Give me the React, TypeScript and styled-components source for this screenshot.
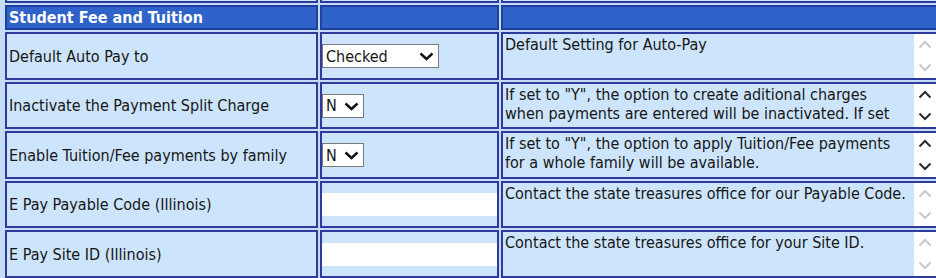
import React from 'react';
import styled, { createGlobalStyle } from 'styled-components';

const GlobalStyle = createGlobalStyle`
	html, body {
		margin: 0;
		padding: 0;
		background: #c4dcf6;
		overflow: hidden;
	}
	body {
		font-family: 'DejaVu Sans Condensed', 'DejaVu Sans', sans-serif;
		font-size: 16px;
		color: #151515;
	}
`;

const Grid = styled.div`
	display: grid;
	grid-template-columns: 313px 179px 450px;
	grid-template-rows: 3px 25px 48px 47px 48px 47px 48px;
	gap: 2px;
	padding-left: 5px;
	width: 960px;
`;

const Cell = styled.div<{ $header?: boolean; $stub?: boolean; $flush?: boolean }>`
	box-sizing: border-box;
	border: 2px solid ${(p) => (p.$header ? '#213f9c' : '#2c3b9c')};
	background: ${(p) => (p.$header ? '#2f63c9' : '#cde5fc')};
	color: ${(p) => (p.$header ? '#ffffff' : 'inherit')};
	font-weight: ${(p) => (p.$header ? 'bold' : 'normal')};
	display: flex;
	align-items: center;
	padding: 0 ${(p) => (p.$flush ? 0 : 2)}px;
	overflow: hidden;
	white-space: nowrap;
	${(p) => p.$stub && 'border-top: none;'}
`;

const SelectWrap = styled.div<{ $width: number }>`
	position: relative;
	box-sizing: border-box;
	width: ${(p) => p.$width}px;
	height: 24px;
	border: 1px solid #7a7a7a;
	background: #ffffff;
`;

const NativeSelect = styled.select`
	appearance: none;
	-webkit-appearance: none;
	border: none;
	background: transparent;
	width: 100%;
	height: 100%;
	padding: 0 0 0 3px;
	font: inherit;
	color: #151515;
	outline: none;
`;

const Caret = styled.svg`
	position: absolute;
	right: 4px;
	top: 7px;
	pointer-events: none;
`;

const TextBox = styled.input`
	box-sizing: border-box;
	width: 100%;
	height: 23px;
	border: 1px solid #ffffff;
	background: #ffffff;
	font: inherit;
	outline: none;
`;

const MemoCell = styled(Cell)`
	padding: 0;
	align-items: stretch;
`;

const Memo = styled.div`
	display: flex;
	width: 100%;
`;

const MemoText = styled.div`
	width: 409px;
	padding: 1px 0 0 2px;
	line-height: 19px;
	overflow: hidden;
	height: 38px;
`;

const MemoLine = styled.div`
	white-space: nowrap;
`;

const ScrollStrip = styled.div`
	width: 22px;
	background: #ffffff;
	display: flex;
	flex-direction: column;
	justify-content: space-between;
	align-items: center;
	padding: 6px 0 6px 0;
	box-sizing: border-box;
`;

const Chevron = ({ up, active }: { up?: boolean; active: boolean }) => (
	<svg width="14" height="9" viewBox="0 0 14 9">
		<polyline
			points={up ? '1.5,7.5 7,2 12.5,7.5' : '1.5,1.5 7,7 12.5,1.5'}
			fill="none"
			stroke={active ? '#2b2b2b' : '#c9c9c9'}
			strokeWidth="2"
		/>
	</svg>
);

const Select = ({ value, width }: { value: string; width: number }) => (
	<SelectWrap $width={width}>
		<NativeSelect defaultValue={value}>
			<option>{value}</option>
		</NativeSelect>
		<Caret width="15" height="9" viewBox="0 0 15 9">
			<polyline points="1.5,1.5 7.5,7 13.5,1.5" fill="none" stroke="#111" strokeWidth="2.4" />
		</Caret>
	</SelectWrap>
);

// the text box wraps at fixed points in the original, keep those lines
const MemoBox = ({ lines, active }: { lines: string[]; active: boolean }) => (
	<MemoCell>
		<Memo>
			<MemoText>
				{lines.map((l) => (
					<MemoLine key={l}>{l}</MemoLine>
				))}
			</MemoText>
			<ScrollStrip>
				<Chevron up active={active} />
				<Chevron active={active} />
			</ScrollStrip>
		</Memo>
	</MemoCell>
);

type Row = {
	label: string;
	control: React.ReactNode;
	help: string[];
	scroll: boolean;
};

const rows: Row[] = [
	{
		label: 'Default Auto Pay to',
		control: <Select value="Checked" width={117} />,
		help: ['Default Setting for Auto-Pay'],
		scroll: false,
	},
	{
		label: 'Inactivate the Payment Split Charge',
		control: <Select value="N" width={42} />,
		help: [
			'If set to "Y", the option to create aditional charges',
			'when payments are entered will be inactivated. If set',
			'to "N", they will be created.',
		],
		scroll: true,
	},
	{
		label: 'Enable Tuition/Fee payments by family',
		control: <Select value="N" width={42} />,
		help: [
			'If set to "Y", the option to apply Tuition/Fee payments',
			'for a whole family will be available.',
		],
		scroll: true,
	},
	{
		label: 'E Pay Payable Code (Illinois)',
		control: <TextBox type="text" />,
		help: ['Contact the state treasures office for our Payable Code.'],
		scroll: false,
	},
	{
		label: 'E Pay Site ID (Illinois)',
		control: <TextBox type="text" />,
		help: ['Contact the state treasures office for your Site ID.'],
		scroll: false,
	},
];

export default function App() {
	return (
		<>
			<GlobalStyle />
			<Grid>
				<Cell $stub />
				<Cell $stub />
				<Cell $stub />
				<Cell $header>Student Fee and Tuition</Cell>
				<Cell $header />
				<Cell $header />
				{rows.map((row) => (
					<React.Fragment key={row.label}>
						<Cell>{row.label}</Cell>
						<Cell $flush>{row.control}</Cell>
						<MemoBox lines={row.help} active={row.scroll} />
					</React.Fragment>
				))}
			</Grid>
		</>
	);
}
